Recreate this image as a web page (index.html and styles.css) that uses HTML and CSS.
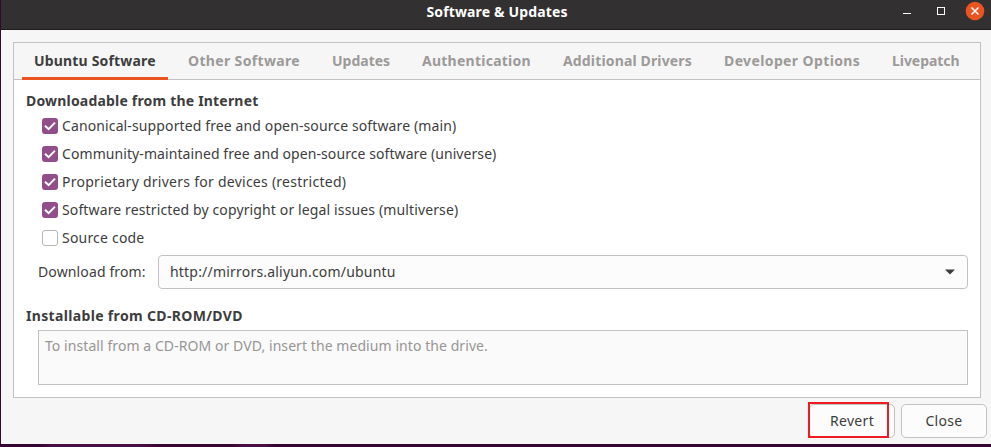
FILE: index.html
```html
<!DOCTYPE html>
<html lang="en">
<head>
<meta charset="utf-8">
<title>Software &amp; Updates</title>
<link rel="stylesheet" href="styles.css">
</head>
<body>
<div class="window">
  <header class="titlebar">
    <h1 class="title">Software &amp; Updates</h1>
    <div class="controls">
      <svg width="84" height="22" viewBox="0 0 84 22">
        <rect x="2" y="13" width="8" height="1" fill="#fff"/>
        <rect x="36.500" y="7.500" width="7" height="7" fill="none" stroke="#fff"/>
        <circle cx="74" cy="11" r="9.300" fill="#e95420"/>
        <path d="M70.500 7.500l7 7M77.500 7.500l-7 7" stroke="#fff" stroke-width="1.500" fill="none"/>
      </svg>
    </div>
  </header>
  <main class="content">
    <section class="notebook">
      <nav class="tabs">
        <div class="tab active">Ubuntu Software</div>
        <div class="tab other">Other Software</div>
        <div class="tab updates">Updates</div>
        <div class="tab auth">Authentication</div>
        <div class="tab drivers">Additional Drivers</div>
        <div class="tab developer">Developer Options</div>
        <div class="tab livepatch">Livepatch</div>
      </nav>
      <div class="page">
        <h2 class="heading internet">Downloadable from the Internet</h2>
        <div class="checks">
          <div class="check"><span class="box on"><svg width="16" height="16" viewBox="0 0 16 16"><path d="M3 7.800l3.600 3.400 6.400-6.600"/></svg></span><span class="main">Canonical-supported free and open-source software (main)</span></div>
          <div class="check"><span class="box on"><svg width="16" height="16" viewBox="0 0 16 16"><path d="M3 7.800l3.600 3.400 6.400-6.600"/></svg></span><span class="universe">Community-maintained free and open-source software (universe)</span></div>
          <div class="check"><span class="box on"><svg width="16" height="16" viewBox="0 0 16 16"><path d="M3 7.800l3.600 3.400 6.400-6.600"/></svg></span><span class="restricted">Proprietary drivers for devices (restricted)</span></div>
          <div class="check"><span class="box on"><svg width="16" height="16" viewBox="0 0 16 16"><path d="M3 7.800l3.600 3.400 6.400-6.600"/></svg></span><span class="multiverse">Software restricted by copyright or legal issues (multiverse)</span></div>
          <div class="check"><span class="box"></span><span class="source">Source code</span></div>
        </div>
        <div class="download">
          <span class="download-label">Download from:</span>
          <div class="select"><span>http://mirrors.aliyun.com/ubuntu</span>
            <svg width="10" height="6" viewBox="0 0 10 6"><path d="M0 .5h10L5 5.500z" fill="#3d3d3d"/></svg>
          </div>
        </div>
        <h2 class="heading cdrom">Installable from CD-ROM/DVD</h2>
        <div class="medium">To install from a CD-ROM or DVD, insert the medium into the drive.</div>
      </div>
    </section>
    <footer class="actions">
      <div class="button revert">Revert</div>
      <div class="button close">Close</div>
    </footer>
  </main>
</div>
</body>
</html>
```

FILE: styles.css
```css
*, *::after { box-sizing: border-box; }
body {
  margin: 0;
  height: 447px;
  overflow: hidden;
  padding-left: 1px;
  background: linear-gradient(90deg, #35062f 0, #35062f 40px, #4a0e41 52px, #4a0e41 140px, #38072f 160px, #38072f 232px, #4a0e41 242px, #4a0e41 265px, #35062f 275px);
  color: #3d3d3d;
  font: 14px/20px "Noto Sans", sans-serif;
  white-space: nowrap;
}
h1, h2 { margin: 0; font-size: 14px; line-height: 20px; font-weight: bold; }
svg { display: block; }

.window { height: 444px; display: flex; flex-direction: column; background: #f6f6f6; }
.titlebar {
  height: 30px;
  flex: none;
  display: grid;
  grid-template-columns: 90px 1fr 90px;
  background: #323030;
  border-bottom: 1px solid #1e1c1c;
}
.title { grid-column: 2; padding: 2px 0 0 2px; text-align: center; color: #fff; letter-spacing: .14px; }
.controls { display: flex; justify-content: flex-end; padding-right: 6px; }

.content { padding: 12px 10px 0 12px; }
.notebook { height: 356px; border: 1px solid #c3c1c0; background: #fff; }
.tabs { height: 37px; display: flex; gap: 8px; padding-left: 8px; background: #f6f6f6; box-shadow: inset 0 -1px #c3c1c0; }
.tab { padding: 8px 12px 0; font-weight: bold; color: #9c9a99; }
.active { width: 146px; color: #3d3d3d; border-bottom: 3px solid #e95420; letter-spacing: .17px; }
.other { width: 136px; letter-spacing: .35px; }
.updates { width: 82px; letter-spacing: 0; }
.auth { width: 133px; letter-spacing: .25px; }
.drivers { width: 153px; letter-spacing: .15px; }
.developer { width: 160px; letter-spacing: .38px; }
.livepatch { letter-spacing: -.05px; }

.page { padding: 11px 12px 0; }
.internet { letter-spacing: .19px; }
.cdrom { margin-top: 17px; letter-spacing: .34px; }
.checks { display: grid; gap: 8px; padding: 5px 0 0 16px; }
.check { display: flex; align-items: center; gap: 4px; height: 20px; }
.box { width: 16px; height: 16px; flex: none; border: 1px solid #b8b6b4; border-radius: 3px; background: #fff; }
.on { border: 0; background: #924d8b; }
.on path { fill: none; stroke: #fff; stroke-width: 2; }
.main { letter-spacing: .12px; }
.universe { letter-spacing: .08px; }
.restricted { letter-spacing: .26px; }
.multiverse { letter-spacing: .13px; }
.source { letter-spacing: .2px; }

.download { display: flex; align-items: center; margin-top: 7px; padding-left: 12px; }
.download-label { width: 120px; letter-spacing: .13px; }
.select {
  flex: 1;
  height: 34px;
  display: flex;
  align-items: center;
  justify-content: space-between;
  padding: 0 12px 0 11px;
  border: 1px solid #c3c1c0;
  border-radius: 4px;
  background: #fcfcfc;
  letter-spacing: .2px;
}
.medium {
  height: 55px;
  margin: 4px 0 0 12px;
  padding: 5px 6px;
  border: 1px solid #c3c1c0;
  background: #fafafa;
  color: #979594;
  letter-spacing: .07px;
}

.actions { display: flex; justify-content: flex-end; gap: 6px; margin-right: -6px; padding-top: 6px; }
.button {
  position: relative;
  width: 86px;
  height: 34px;
  border: 1px solid #c3c1c0;
  border-radius: 5px;
  background: #fcfcfc;
  line-height: 32px;
  text-align: center;
}
.revert { letter-spacing: .3px; }
.close { letter-spacing: .3px; }
.revert::after {
  content: "";
  position: absolute;
  left: -2px;
  top: -3px;
  width: 81px;
  height: 36px;
  border: 2px solid #ed1c24;
}
```
